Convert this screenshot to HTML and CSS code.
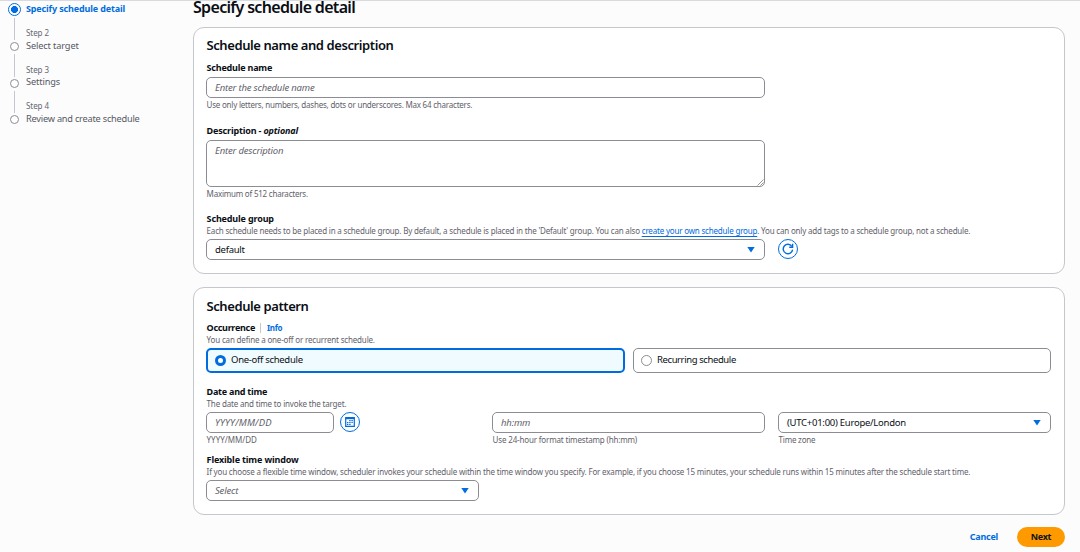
FILE: index.html
```html
<!DOCTYPE html>
<html lang="en">
<head>
<meta charset="utf-8">
<title>Specify schedule detail</title>
<link rel="stylesheet" href="styles.css">
</head>
<body>
<div class="page">
  <nav class="wizard">
    <ol class="steps">
      <li class="step step-active">
        <div class="rail"><span class="dot"></span></div>
        <div class="step-text"><span class="step-title">Specify schedule detail</span></div>
      </li>
      <li class="step">
        <div class="rail"><span class="line"></span><span class="dot"></span></div>
        <div class="step-text"><span class="step-label">Step 2</span><span class="step-title">Select target</span></div>
      </li>
      <li class="step">
        <div class="rail"><span class="line"></span><span class="dot"></span></div>
        <div class="step-text"><span class="step-label">Step 3</span><span class="step-title">Settings</span></div>
      </li>
      <li class="step">
        <div class="rail"><span class="line"></span><span class="dot"></span></div>
        <div class="step-text"><span class="step-label">Step 4</span><span class="step-title review">Review and create schedule</span></div>
      </li>
    </ol>
  </nav>
  <main class="content">
    <h1>Specify schedule detail</h1>

    <section class="card card-name">
      <h2>Schedule name and description</h2>
      <div class="field">
        <div class="label">Schedule name</div>
        <div class="input wide"><span class="placeholder">Enter the schedule name</span></div>
        <div class="hint tight">Use only letters, numbers, dashes, dots or underscores. Max 64 characters.</div>
      </div>
      <div class="field field-description">
        <div class="label optional-label">Description - <i>optional</i></div>
        <div class="input wide textarea">
          <span class="placeholder">Enter description</span>
          <svg class="grip" viewBox="0 0 7 7"><path d="M0.5 6.5 6.5 0.5M3.5 6.5 6.5 3.5"/></svg>
        </div>
        <div class="hint tight">Maximum of 512 characters.</div>
      </div>
      <div class="field field-group">
        <div class="label group-label">Schedule group</div>
        <div class="hint desc">Each schedule needs to be placed in a schedule group. By default, a schedule is placed in the 'Default' group. You can also <a class="link">create your own schedule group</a>. You can only add tags to a schedule group, not a schedule.</div>
        <div class="row">
          <div class="input wide select"><span class="value">default</span><span class="caret"></span></div>
          <button class="round refresh" aria-label="Refresh">
            <svg viewBox="0 0 12 12"><path d="M10.6 6.6A4.7 4.7 0 1 1 9.8 3.3"/><path d="M10.6 0.8V4.2H7.2"/></svg>
          </button>
        </div>
      </div>
    </section>

    <section class="card card-pattern">
      <h2>Schedule pattern</h2>
      <div class="field">
        <div class="label occurrence">Occurrence<span class="divider"></span><a class="info">Info</a></div>
        <div class="hint desc">You can define a one-off or recurrent schedule.</div>
        <div class="tiles">
          <div class="tile tile-on"><span class="radio radio-on"></span><span class="value oneoff">One-off schedule</span></div>
          <div class="tile"><span class="radio"></span><span class="value recurring">Recurring schedule</span></div>
        </div>
      </div>
      <div class="field field-date">
        <div class="label date-label">Date and time</div>
        <div class="hint desc">The date and time to invoke the target.</div>
        <div class="columns">
          <div>
            <div class="date-row">
              <div class="input date"><span class="placeholder date-ph">YYYY/MM/DD</span></div>
              <button class="round" aria-label="Choose date">
                <svg class="calendar" viewBox="0 0 10 10"><path d="M.7 .7H9.3V9.3H.7Z"/><path class="head" d="M.7 1.3H9.3"/><path class="days" d="M4.2 3.6H8M2 5.5H8M2 7.4H6"/></svg>
              </button>
            </div>
            <div class="hint date-hint">YYYY/MM/DD</div>
          </div>
          <div>
            <div class="input"><span class="placeholder">hh:mm</span></div>
            <div class="hint">Use 24-hour format timestamp (hh:mm)</div>
          </div>
          <div>
            <div class="input select"><span class="value">(UTC+01:00) Europe/London</span><span class="caret"></span></div>
            <div class="hint tight">Time zone</div>
          </div>
        </div>
      </div>
      <div class="field field-window">
        <div class="label window-label">Flexible time window</div>
        <div class="hint desc window-desc">If you choose a flexible time window, scheduler invokes your schedule within the time window you specify. For example, if you choose 15 minutes, your schedule runs within 15 minutes after the schedule start time.</div>
        <div class="input select window-select"><span class="placeholder">Select</span><span class="caret"></span></div>
      </div>
    </section>

    <div class="actions">
      <a class="cancel">Cancel</a>
      <button class="next">Next</button>
    </div>
  </main>
</div>
</body>
</html>
```
FILE: styles.css
```css
* { box-sizing: border-box; }
body {
  margin: 0;
  background: #fcfcfd;
  color: #0a0e14;
  font: 9px/12px "Noto Sans", "Open Sans", sans-serif;
  overflow: hidden;
}
.page { display: flex; height: 552px; border-top: 1px solid #d9dade; overflow: hidden; }
button { font: inherit; padding: 0; margin: 0; border: 0; background: none; }

/* Wizard navigation */
.wizard { width: 193px; padding-left: 7px; flex: none; }
.steps { list-style: none; margin: 0; padding: 0; }
.step { display: flex; gap: 5px; height: 36.4px; color: #565963; }
.step-active { height: 14px; color: #006ce0; font-weight: 700; letter-spacing: -.147px; }
.rail { width: 14px; display: flex; flex-direction: column; align-items: center; justify-content: flex-end; gap: 2px; padding-top: 3px; }
.line { width: 1px; flex: 1; background: #c6c6cd; }
.dot { width: 9px; height: 9px; flex: none; border: 1.5px solid #8c8c94; border-radius: 50%; background: #fff; }
.step-active .dot { width: 13px; height: 13px; margin-bottom: -1px; border: 1.5px solid #006ce0; background: radial-gradient(circle, #006ce0 3.2px, #fff 3.8px); }
.step-text { display: flex; flex-direction: column; justify-content: flex-end; white-space: nowrap; }
.step-label { font-size: 8px; line-height: 13px; letter-spacing: -.06px; color: #656871; }
.step-title { line-height: 12px; }
.step-label + .step-title { font-size: 9.2px; letter-spacing: -.12px; line-height: 12px; margin-bottom: -.5px; padding-top: .5px; }
.step-label + .review { letter-spacing: -.21px; }

/* Content */
.content { width: 872px; flex: none; }
h1 { margin: 0; height: 26px; font-size: 16px; line-height: 12px; font-weight: 600; letter-spacing: -.68px; }
h2 { margin: 0 0 0 .5px; font-size: 13px; line-height: 17px; height: 16px; font-weight: 600; letter-spacing: -.41px; }
.card { background: #fff; border: 1px solid #c6c6cd; border-radius: 11px; padding: 9px 13px 0 12px; }
.card-name { height: 247px; }
.card-pattern { height: 228px; margin-top: 13px; padding-top: 10px; }
.field { margin-top: 9px; }
.card-pattern h2 + .field { margin-top: 8px; }
.card .field-description { margin-top: 15px; }
.card .field-group { margin-top: 14px; }
.card .field-date { margin-top: 13px; }
.card .field-window { margin-top: 9px; }

.label { font-weight: 700; letter-spacing: -.204px; margin-bottom: 3px; padding-left: .6px; }
.label:has(+ .desc) { margin-bottom: 0; }
.optional-label { letter-spacing: -.16px; }
.group-label { letter-spacing: -.155px; }
.date-label { letter-spacing: -.24px; }
.window-label { letter-spacing: -.148px; }
.occurrence { display: flex; align-items: center; letter-spacing: -.3px; }
.divider { width: 1px; height: 10px; margin: 0 5.5px; background: #c6c6cd; }
.info { font-size: 8px; letter-spacing: -.3px; color: #006ce0; }

.hint { margin-top: 1px; padding-left: .6px; font-size: 8px; line-height: 11px; letter-spacing: -.163px; color: #5f626b; white-space: nowrap; }
.tight { letter-spacing: -.218px; }
.desc { margin: 0 0 3px; letter-spacing: -.17px; }
.field-group .desc { letter-spacing: -.187px; }
.window-desc { letter-spacing: -.175px; }
.date-hint { letter-spacing: 0; }
.link { color: #006ce0; text-decoration: underline; text-underline-offset: 2px; text-decoration-thickness: 1px; }

.input { height: 21px; display: flex; align-items: center; padding: 0 8px; border: 1px solid #8c8c94; border-radius: 5px; background: #fff; white-space: nowrap; }
.wide { width: 559px; }
.placeholder { font-size: 9.5px; font-style: italic; color: #5f626b; letter-spacing: -.18px; }
.date-ph { letter-spacing: .2px; }
.value { font-size: 9.5px; letter-spacing: -.26px; }
.oneoff { letter-spacing: -.289px; }
.recurring { letter-spacing: -.4px; }
.textarea { position: relative; height: 47px; align-items: flex-start; padding-top: 4px; }
.grip { position: absolute; right: 0; bottom: 0; width: 7px; height: 7px; fill: none; stroke: #77777f; stroke-width: .8; }
.select { justify-content: space-between; }
.caret { width: 8px; height: 6px; margin-right: 1px; background: #006ce0; clip-path: polygon(0 0, 100% 0, 50% 100%); }
.row { display: flex; gap: 13px; align-items: flex-start; }

.round { width: 20px; height: 20px; flex: none; display: grid; place-items: center; border: 1px solid #006ce0; border-radius: 50%; }
.round svg { width: 12px; height: 12px; fill: none; stroke: #006ce0; stroke-width: 1.4; }
.round .calendar { width: 10px; height: 10px; stroke-width: 1.2; }
.calendar .head { stroke-width: 1.8; }
.calendar .days { stroke-width: 1.2; stroke-dasharray: 1.4 .8; }

.tiles { display: grid; grid-template-columns: 1fr 1fr; gap: 8px; }
.tile { height: 25px; display: flex; align-items: center; gap: 5px; padding: 0 7.5px 1px; border: 1px solid #8c8c94; border-radius: 5px; }
.tile-on { border: 2px solid #006ce0; background: #f0fbff; padding: 0 7px 1px; }
.radio { width: 11px; height: 11px; border: 1px solid #8c8c94; border-radius: 50%; background: #fff; }
.radio-on { border: 3.5px solid #006ce0; }

.columns { display: grid; grid-template-columns: repeat(3, 1fr); gap: 13px; }
.date-row { display: flex; gap: 6px; }
.date { width: 128px; }
.window-select { width: 273px; }

.actions { display: flex; justify-content: flex-end; align-items: center; gap: 19px; margin-top: 12px; font-weight: 700; }
.cancel { color: #006ce0; letter-spacing: -.236px; }
.next { width: 48px; height: 20px; border-radius: 10px; background: #ff9900; color: #0f141a; letter-spacing: -.33px; }
```
